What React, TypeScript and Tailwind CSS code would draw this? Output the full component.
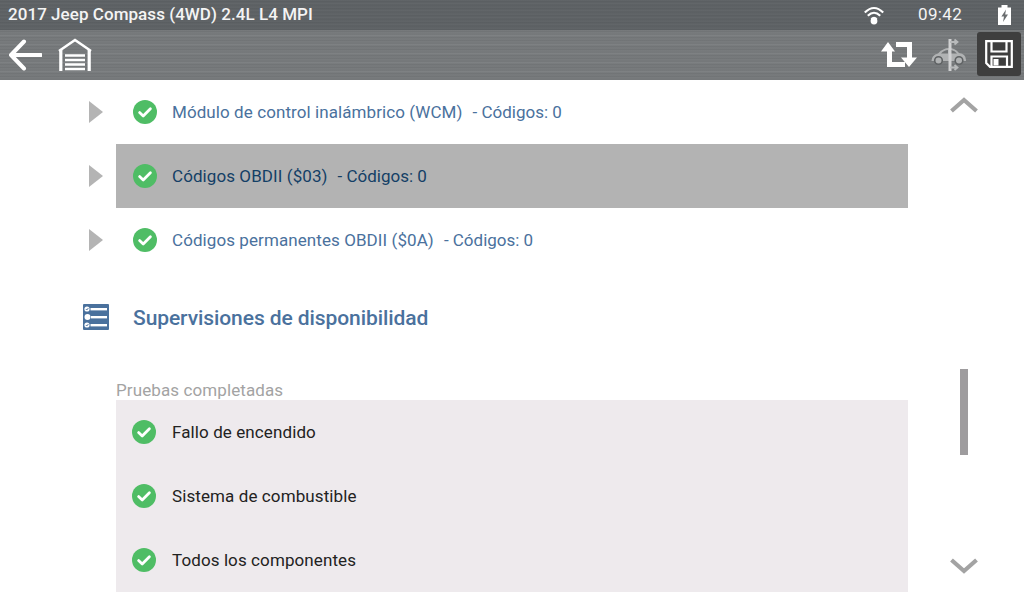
const Check = ({ className = "" }: { className?: string }) => (
  <svg viewBox="0 0 24 24" className={`w-6 h-6 shrink-0 ${className}`}>
    <circle cx="12" cy="12" r="12" fill="#4fbd65" />
    <path d="M6.6 12.6 L10.2 16 L17.4 8.8" fill="none" stroke="#fff" strokeWidth="2.8" strokeLinecap="round" strokeLinejoin="round" />
  </svg>
);

const Tri = () => (
  <svg viewBox="0 0 14 22" className="w-[14px] h-[22px] shrink-0">
    <path d="M0 0 L14 11 L0 22 Z" fill="#b4b4b4" />
  </svg>
);

const Row = ({ title, codes, selected }: { title: string; codes: string; selected?: boolean }) => (
  <div className="flex items-center h-16">
    <div className="w-[116px] pl-[89px] flex items-center shrink-0"><Tri /></div>
    <div className={`flex-1 h-16 flex items-center pl-[17px] ${selected ? "bg-[#b3b3b3] text-[#143f66]" : "text-[#4a719d]"}`}>
      <Check />
      <span className="ml-[15px] pt-[2px] text-[17px] tracking-[0.08px]">{title}</span>
      <span className="ml-[10px] pt-[2px] text-[17px]">{codes}</span>
    </div>
  </div>
);

const PanelRow = ({ text }: { text: string }) => (
  <div className="flex items-center h-16 pl-4">
    <Check />
    <span className="ml-4 pt-[2px] text-[17px] tracking-[0.1px] text-[#222222]">{text}</span>
  </div>
);

export default function App() {
  return (
    <div className="w-[1024px] h-[600px] overflow-hidden bg-white flex flex-col font-['Roboto',sans-serif]">
      <div className="h-[30px] shrink-0 flex items-center pl-2 pr-[13px] text-white bg-[#5e6265] bg-[repeating-linear-gradient(180deg,#63676a_0px,#585c5f_2px,#64686b_3px,#5b5f62_5px,#606467_7px)]">
        <span className="text-[17px] font-medium tracking-[0.05px] text-[#f4f4f4]">2017 Jeep Compass (4WD) 2.4L L4 MPI</span>
        <svg viewBox="0 0 20 20" className="w-5 h-5 ml-auto">
          <g fill="none" stroke="#fff" strokeWidth="2.1">
            <path d="M0.8 7.6 Q10 -1.6 19.2 7.6" />
            <path d="M3.8 10.8 Q10 4.6 16.2 10.8" />
          </g>
          <path d="M6.5 13.6 Q10 9.8 13.5 13.6 L10 15 Z" fill="#fff" />
          <circle cx="10" cy="16" r="3.4" fill="#fff" />
        </svg>
        <span className="ml-[34px] w-[46px] text-[17px] tracking-[0.35px] text-[#f4f4f4]">09:42</span>
        <svg viewBox="0 0 13 20" className="w-[13px] h-5 ml-[34px]">
          <path d="M3.5 0 H9.5 V2.5 H13 V20 H0 V2.5 H3.5 Z" fill="#fff" />
          <path d="M8 4.5 L3.4 11.5 H6 L5 17 L10 9.6 H7.2 Z" fill="#6b6e70" />
        </svg>
      </div>
      <div className="h-[50px] shrink-0 flex items-center pl-2 pr-[3px] bg-[#76797b] bg-[repeating-linear-gradient(180deg,#7f8284_0px,#6e7173_1px,#7b7e80_3px,#717476_4px,#828587_6px,#6f7274_7px,#797c7e_9px)]">
        <svg viewBox="0 0 34 32" className="w-[34px] h-8">
          <path d="M16 2.5 L3 16 L16 29.5 M3 16 H33" fill="none" stroke="#fff" strokeWidth="4" strokeLinejoin="round" strokeLinecap="round" />
        </svg>
        <svg viewBox="0 0 34 34" className="w-[34px] h-[34px] ml-[16px]">
          <path d="M1 13 L17 2 L33 13" fill="none" stroke="#fff" strokeWidth="2.6" />
          <path d="M2.8 12 V33 M31.2 12 V33" stroke="#fff" strokeWidth="3.2" fill="none" />
          <path d="M7 17.5 H27 M7 22 H27 M7 26.5 H27 M7 31 H27" stroke="#fff" strokeWidth="2.5" />
        </svg>
        <svg viewBox="0 0 36 26" className="w-9 h-[26px] ml-auto">
          <path d="M7 0 L14 9.5 H11 V20 H24 V25 H6 V9.5 H0 Z" fill="#fff" />
          <path d="M15 0 H31 V15.5 H36 L28 25 L20 15.5 H26 V5 H15 Z" fill="#fff" />
        </svg>
        <svg viewBox="0 0 36 34" className="w-9 h-[34px] ml-[14px]">
          <path d="M0.5 23 Q0.5 17 7 15.5 Q12 10 18 10 Q24 10 28 15 Q35 16 35 22 V23 H0.5 Z" fill="#b0b2b3" />
          <path d="M10 15.5 Q13 12 17 12 V15.5 Z M20 12 Q24 12.5 26 15.5 H20 Z" fill="#707375" />
          <circle cx="7.5" cy="22.5" r="3.8" fill="#b0b2b3" stroke="#5f6264" strokeWidth="1.6" />
          <circle cx="28" cy="22.5" r="3.8" fill="#b0b2b3" stroke="#5f6264" strokeWidth="1.6" />
          <path d="M19 1 V33" stroke="#d0d1d2" strokeWidth="3" />
          <path d="M19 4 H26 M23.5 1.5 L26.5 4 L23.5 6.5 M19 29.5 H26 M23.5 27 L26.5 29.5 L23.5 32" stroke="#b8babb" strokeWidth="1.8" fill="none" />
        </svg>
        <div className="w-11 h-11 ml-[10px] mb-[2px] bg-[#3e3e3e] rounded-[3px] flex items-center justify-center">
          <svg viewBox="0 0 28 28" className="w-7 h-7">
            <path d="M1.2 1.2 H26.8 V26.8 H5 L1.2 23 Z" fill="none" stroke="#fff" strokeWidth="2.2" />
            <path d="M6.5 1.2 V11.5 H21.5 V1.2" fill="none" stroke="#fff" strokeWidth="2.2" />
            <path d="M6.5 26.8 V16.5 H22 V26.8" fill="none" stroke="#fff" strokeWidth="2.2" />
            <rect x="8.5" y="19" width="5" height="6.5" fill="#fff" />
          </svg>
        </div>
      </div>
      <div className="flex-1 flex min-h-0">
        <div className="w-[908px] shrink-0 flex flex-col">
          <Row title="Módulo de control inalámbrico (WCM)" codes="- Códigos: 0" />
          <Row title="Códigos OBDII ($03)" codes="- Códigos: 0" selected />
          <Row title="Códigos permanentes OBDII ($0A)" codes="- Códigos: 0" />
          <div className="h-[92px] flex items-center pl-[83px]">
            <svg viewBox="0 0 26 26" className="w-[26px] h-[26px] shrink-0 mb-[2px]">
              <rect width="26" height="26" rx="1" fill="#4a719d" />
              <rect x="7.5" y="4" width="16.5" height="2.4" fill="#fff" />
              <rect x="8" y="12" width="16" height="2.4" fill="#fff" />
              <rect x="7.5" y="20" width="16.5" height="2.4" fill="#fff" />
              <circle cx="4" cy="5" r="2.6" fill="#fff" />
              <circle cx="4.5" cy="13" r="3" fill="#fff" />
              <circle cx="4" cy="21" r="2.6" fill="#fff" />
              <path d="M2.8 5 L3.8 6 L5.4 4 M2.8 21 L3.8 22 L5.4 20" stroke="#4a719d" strokeWidth="0.9" fill="none" />
            </svg>
            <span className="ml-6 pt-[2px] text-[21px] font-medium tracking-[-0.08px] text-[#4a719d]">Supervisiones de disponibilidad</span>
          </div>
          <div className="pl-[116px] h-9 flex items-end">
            <span className="text-[17px] tracking-[0.1px] leading-[20px] text-[#a3a3a3]">Pruebas completadas</span>
          </div>
          <div className="ml-[116px] h-[192px] bg-[#eeeaed]">
            <PanelRow text="Fallo de encendido" />
            <PanelRow text="Sistema de combustible" />
            <PanelRow text="Todos los componentes" />
          </div>
        </div>
        <div className="relative flex-1">
          <svg viewBox="0 0 30 18" className="absolute left-[41px] top-[16px] w-[30px] h-[18px]">
            <path d="M2.5 15 L15 4 L27.5 15" fill="none" stroke="#a3a3a3" strokeWidth="4.2" />
          </svg>
          <div className="absolute left-[52px] top-[289px] w-2 h-[86px] bg-[#9e9c9e]" />
          <svg viewBox="0 0 30 18" className="absolute left-[41px] top-[477px] w-[30px] h-[18px]">
            <path d="M2.5 3 L15 14 L27.5 3" fill="none" stroke="#a3a3a3" strokeWidth="4.2" />
          </svg>
        </div>
      </div>
    </div>
  );
}
